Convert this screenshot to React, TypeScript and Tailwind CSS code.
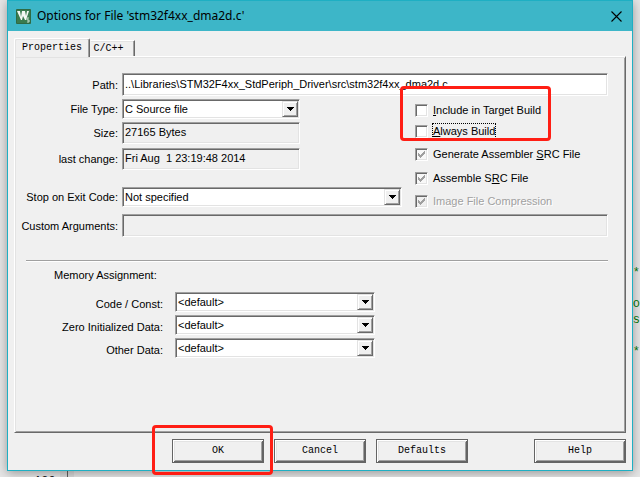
import type { ReactNode } from "react";
import clsx from "clsx";

const sunken =
  "border border-t-[#a0a0a0] border-l-[#a0a0a0] border-r-white border-b-white shadow-[inset_1px_1px_#696969,inset_-1px_-1px_#e3e3e3] outline-none";

const raised =
  "border border-[#646464] bg-[#f0f0f0] shadow-[inset_1px_1px_#fff,inset_-1px_-1px_#646464,inset_2px_2px_#e3e3e3,inset_-2px_-2px_#a0a0a0]";

function Row({ id, label, wide, children }: { id: string; label: ReactNode; wide?: boolean; children: ReactNode }) {
  return (
    <div className="flex items-center gap-1">
      <label htmlFor={id} className={clsx("shrink-0 whitespace-pre text-right", wide ? "w-[148px] pt-1" : "w-[103px]")}>
        {label}
      </label>
      {children}
    </div>
  );
}

function Select({ id, value, className }: { id: string; value: string; className: string }) {
  return (
    <div className={clsx("relative h-5", className)}>
      <select id={id} className={clsx("h-full w-full appearance-none bg-white pl-0.5", sunken)}>
        <option>{value}</option>
      </select>
      <span
        aria-hidden="true"
        className="pointer-events-none absolute top-0.5 right-0.5 bottom-0.5 flex w-4 items-center justify-center border border-t-[#e3e3e3] border-r-[#696969] border-b-[#696969] border-l-[#e3e3e3] bg-[#f0f0f0] shadow-[inset_1px_1px_#fff,inset_-1px_-1px_#a0a0a0]"
      >
        <svg width="7" height="4" viewBox="0 0 7 4" shapeRendering="crispEdges">
          <path d="M0 0h7v1H6v1H5v1H4v1H3V3H2V2H1V1H0z" />
        </svg>
      </span>
    </div>
  );
}

type CheckProps = { children: ReactNode; checked?: boolean; focused?: boolean; disabled?: boolean; fill?: string };

function Check({ children, checked, focused, disabled, fill = "bg-white" }: CheckProps) {
  return (
    <label className="flex items-center gap-1">
      <span className="relative h-[13px] w-[13px]">
        <input
          type="checkbox"
          defaultChecked={checked}
          disabled={disabled}
          className={clsx("block h-[13px] w-[13px] appearance-none", sunken, fill)}
        />
        {checked && (
          <svg className="pointer-events-none absolute inset-0" width="13" height="13" viewBox="0 0 13 13" shapeRendering="crispEdges">
            <path fill="#a0a0a0" d="M3 5h1v1h1v1h1V6h1V5h1V4h1V3h1v3H9v1H8v1H7v1H6v1H5V9H4V8H3z" />
          </svg>
        )}
      </span>
      <span
        className={clsx(
          "border border-dotted leading-[14px] whitespace-nowrap",
          focused ? "border-black" : "border-transparent",
          disabled && "text-[#a0a0a0] [text-shadow:1px_1px_#fff]",
        )}
      >
        {children}
      </span>
    </label>
  );
}

function PushButton({ children, className }: { children: ReactNode; className?: string }) {
  return (
    <button type="button" className={clsx("h-6 w-[92px] font-['Liberation_Mono',monospace] text-[10px]", raised, className)}>
      {children}
    </button>
  );
}

function Logo() {
  return (
    <svg width="15" height="15" viewBox="0 0 15 15">
      <rect width="15" height="15" rx="1" fill="#2f6a43" />
      <rect x="1" y="1" width="13" height="13" fill="#397b4e" />
      <path d="M1 2h3l1 6 1-6h3l1 5 1-5h2l-3 9H9L7 7l-1 4H5z" fill="#f4f8f4" />
      <path d="M13 9h-2v2h2v2h-2" fill="none" stroke="#c9e0cf" />
    </svg>
  );
}

export default function App() {
  return (
    <div className="relative min-h-screen overflow-hidden bg-[#e6e6e6] pr-[7px] pb-[7px] pl-[7px] font-['Liberation_Sans',Arial,sans-serif] text-[11px] leading-4 text-black">
      {/* Editor left visible around the dialog */}
      <div aria-hidden="true" className="absolute inset-0 overflow-hidden font-['Liberation_Mono',monospace] text-[12px] text-[#087808]">
        <span className="absolute top-[265px] right-0">*</span>
        <span className="absolute top-[296px] right-0">fo</span>
        <span className="absolute top-[312px] right-0">s</span>
        <span className="absolute top-[344px] right-0">*</span>
        <span className="absolute -bottom-3 left-[34px] font-bold text-[#222]">180</span>
        <span className="absolute bottom-0 left-[60px] h-[7px] w-[14px] bg-[#dadada]" />
        <span className="absolute bottom-0 left-[67px] h-[7px] w-px bg-[#606060]" />
        <span className="absolute bottom-0 left-[79px] h-px w-0.5 bg-[#087808]" />
      </div>

      <main className="relative border border-[#1eafc3] bg-[#f0f0f0] shadow-[0_2px_10px_rgba(0,0,0,0.35)]">
        <header className="flex h-[30px] items-center bg-[#3db6c8] pr-2.5 pl-2">
          <Logo />
          <h1 className="ml-1.5 flex-1 font-['Noto_Sans',sans-serif] text-[12px]">Options for File 'stm32f4xx_dma2d.c'</h1>
          <button type="button" aria-label="Close">
            <svg width="11" height="11" viewBox="0 0 11 11" fill="none" stroke="#000" strokeWidth="1.1">
              <path d="M.5.5l10 10M10.5.5l-10 10" />
            </svg>
          </button>
        </header>

        <div className="px-1.5 pt-[7px] pb-[7px]">
          <div role="tablist" className="flex h-[18px] items-end font-['Liberation_Mono',monospace] text-[10px]">
            <button
              role="tab"
              aria-selected="true"
              className="relative -mb-px h-[19px] w-[76px] rounded-t-xs border border-b-0 border-t-white border-r-[#696969] border-l-white bg-[#f0f0f0] shadow-[inset_-1px_0_#a0a0a0,inset_1px_1px_#e3e3e3]"
            >
              Properties
            </button>
            <button
              role="tab"
              aria-selected="false"
              className="h-4 w-[45px] border border-b-0 border-t-white border-r-[#696969] border-l-transparent pr-2 shadow-[inset_-1px_0_#a0a0a0,inset_0_1px_#e3e3e3]"
            >
              C/C++
            </button>
          </div>

          <section className="h-[377px] border border-t-white border-r-[#696969] border-b-[#696969] border-l-white pt-4 pr-[17px] shadow-[inset_1px_0_#e3e3e3,inset_0_1px_#e3e3e3,inset_-1px_-1px_#a0a0a0]">
            <Row id="path" label="Path:">
              <input id="path" defaultValue="..\Libraries\STM32F4xx_StdPeriph_Driver\src\stm32f4xx_dma2d.c" className={clsx("h-[23px] min-w-0 flex-1 bg-white px-0.5 pb-0.5", sunken)} />
            </Row>

            <div className="mt-[3px] flex gap-[13px]">
              <div className="w-[387px]">
                <Row id="type" label="File Type:">
                  <Select id="type" value="C Source file" className="w-[178px]" />
                </Row>
                <div className="mt-[3px]">
                  <Row id="size" label="Size:">
                    <input id="size" readOnly defaultValue="27165 Bytes" className={clsx("h-[22px] w-[178px] px-0.5 pb-0.5", sunken)} />
                  </Row>
                </div>
                <div className="mt-1">
                  <Row id="changed" label="last change:">
                    <input id="changed" readOnly defaultValue="Fri Aug  1 23:19:48 2014" className={clsx("h-[22px] w-[178px] px-0.5 pb-0.5", sunken)} />
                  </Row>
                </div>
                <div className="mt-[17px]">
                  <Row id="stop" label="Stop on Exit Code:">
                    <Select id="stop" value="Not specified" className="flex-1" />
                  </Row>
                </div>
              </div>
              <div className="flex flex-col pt-[3px]">
                <Check>
                  <u>I</u>nclude in Target Build
                </Check>
                <div className="mt-[5px]">
                  <Check focused>
                    <u>A</u>lways Build
                  </Check>
                </div>
                <div className="mt-[7px]">
                  <Check checked fill="bg-[#f8f8f8]">
                    Generate Assembler <u>S</u>RC File
                  </Check>
                </div>
                <div className="mt-2">
                  <Check checked fill="bg-[#f8f8f8]">
                    Assemble S<u>R</u>C File
                  </Check>
                </div>
                <div className="mt-[7px]">
                  <Check checked disabled fill="bg-[#f0f0f0]">
                    Image File Compression
                  </Check>
                </div>
              </div>
            </div>

            <div className="mt-[5px]">
              <Row
                id="args"
                label={
                  <>
                    Custom Ar<u>g</u>uments:
                  </>
                }
              >
                <input id="args" disabled className={clsx("h-[23px] min-w-0 flex-1 px-0.5", sunken)} />
              </Row>
            </div>

            <hr className="mt-[23px] ml-[11px] h-0.5 border-t border-b border-t-[#a0a0a0] border-b-white" />
            <h2 className="mt-[5px] ml-[39px]">Memory Assignment:</h2>
            <div className="mt-[9px] flex flex-col gap-[3px]">
              <Row wide id="code" label="Code / Const:">
                <Select id="code" value="<default>" className="ml-2 w-[200px]" />
              </Row>
              <Row wide id="zero" label="Zero Initialized Data:">
                <Select id="zero" value="<default>" className="ml-2 w-[200px]" />
              </Row>
              <Row wide id="other" label="Other Data:">
                <Select id="other" value="<default>" className="ml-2 w-[200px]" />
              </Row>
            </div>
          </section>

          <footer className="mt-1.5 flex gap-2.5 pl-[158px]">
            <PushButton>OK</PushButton>
            <PushButton>Cancel</PushButton>
            <PushButton>Defaults</PushButton>
            <PushButton className="ml-auto">Help</PushButton>
          </footer>
        </div>
      </main>

      {/* Red markers drawn over the dialog */}
      <div aria-hidden="true" className="pointer-events-none absolute top-[86px] left-[400px] h-[55px] w-[151px] rounded-sm border-3 border-[#ff1e14]" />
      <div aria-hidden="true" className="pointer-events-none absolute top-[425px] left-[152px] h-[50px] w-[121px] rounded-sm border-3 border-[#ff1e14]" />
    </div>
  );
}
